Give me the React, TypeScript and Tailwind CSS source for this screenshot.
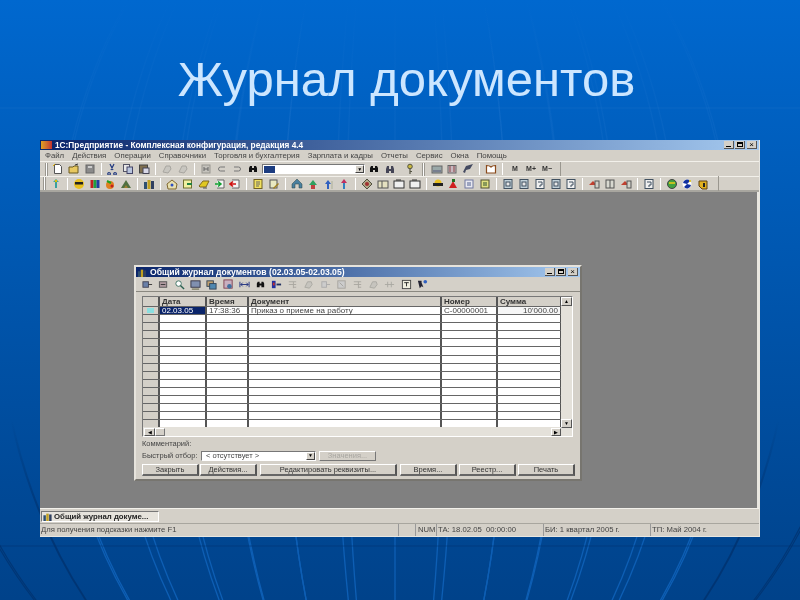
import type { ReactNode } from 'react';

const icons: Record<string, ReactNode> = {
  doc: <><path d="M2.5 1.5h5l2 2v7h-7z" fill="#fff" stroke="#555" /><path d="M1 3l2-2" stroke="#e0b000" /></>,
  folder: <><path d="M1 4h4l1-1h4v7H1z" fill="#e8c860" stroke="#6a5a20" /><path d="M7 2l3-1" stroke="#333" /></>,
  disk: <><rect x="2" y="2" width="8" height="8" fill="#8a8a8a" stroke="#666" /><rect x="4" y="3" width="4" height="2" fill="#ccc" /></>,
  cut: <path d="M4 1l3 6M8 1L5 7M3 9.5a1.3 1.3 0 1 0 .1 0M9 9.5a1.3 1.3 0 1 0 .1 0" fill="none" stroke="#223a80" strokeWidth="1.2" />,
  copy: <><rect x="1.5" y="1.5" width="6" height="7" fill="#e8e8e8" stroke="#556" /><rect x="5" y="4" width="5.5" height="6.5" fill="#b8c4dc" stroke="#446" /></>,
  paste: <><rect x="1.5" y="2" width="8" height="8" fill="#807050" stroke="#444" /><rect x="5" y="5" width="6" height="5.5" fill="#d8d8e8" stroke="#445" /></>,
  faded: <><path d="M2 9l3-6h4l1 3-3 4z" fill="#c8c6c0" stroke="#a8a6a0" /></>,
  calc: <><rect x="2" y="2" width="8" height="8" fill="#c4c2bc" stroke="#98968f" /><path d="M4 4v4M8 4v4M4 6h4" stroke="#666" /></>,
  undo: <path d="M9 8H4.5a2 2 0 0 1 0-4H9" fill="none" stroke="#777" strokeWidth="1" />,
  redo: <path d="M3 4h4.5a2 2 0 0 1 0 4H3" fill="none" stroke="#777" strokeWidth="1" />,
  bino: <path d="M2 9V5l1-2h2v2h2V3h2l1 2v4H7V7H5v2z" fill="#111" />,
  bino2: <path d="M2 10V6l1-3h2v3h2V3h2l1 3v4H7V8H5v2z" fill="#445" />,
  key: <><circle cx="6" cy="3.5" r="2.3" fill="#c8b840" stroke="#554" /><path d="M6 5.5V11M6 8.5h2" stroke="#554" strokeWidth="1.2" /></>,
  screen: <><rect x="1" y="3" width="10" height="7" fill="#9aa8a8" stroke="#666" /><path d="M2 8h8" stroke="#557" /></>,
  sheet: <><rect x="2" y="2.5" width="8" height="7.5" fill="#c8b8c0" stroke="#666" /><path d="M4 3v6M8 3v6" stroke="#844" /></>,
  flag: <path d="M1 9l3-6 7-2-3 5-4 1-1 3z" fill="#444a60" />,
  book: <><path d="M1.5 2.5c2 0 3.5.5 4.5 1.5 1-1 2.5-1.5 4.5-1.5v7.5H1.5z" fill="#fff" stroke="#8a4a1a" strokeWidth="1.2" /></>,
  tree: <><path d="M6 1l3 3H7v6H5V4H3z" fill="#38a0a0" /><circle cx="6" cy="3" r="1.2" fill="#e0c000" /></>,
  glasses: <><circle cx="6" cy="6" r="5" fill="#e8c020" /><rect x="2" y="4" width="8" height="2.5" fill="#222" /></>,
  books: <><rect x="1.5" y="2" width="3" height="8" fill="#c02020" /><rect x="4.5" y="2" width="3" height="8" fill="#20a040" /><rect x="7.5" y="2" width="3" height="8" fill="#2040a0" /></>,
  apple: <><circle cx="6" cy="7" r="4" fill="#e08020" /><path d="M3 3l4 2" stroke="#20a020" strokeWidth="2" /><circle cx="8" cy="8" r="1.5" fill="#c02020" /></>,
  hill: <><path d="M1 10l5-8 5 8z" fill="#507040" /><path d="M4 10l2-3 2 3z" fill="#a08030" /></>,
  bars: <><rect x="1" y="4" width="3" height="7" fill="#305070" /><rect x="4.5" y="2" width="3" height="9" fill="#c0a020" /><rect x="8" y="3" width="3" height="8" fill="#304060" /></>,
  housey: <><path d="M1 6l5-4 5 4-1 5H2z" fill="#e8e0b0" stroke="#806830" /><circle cx="6" cy="7" r="1.5" fill="#3050c0" /></>,
  boxy: <><rect x="1.5" y="2" width="8" height="8" fill="#f0f0a0" stroke="#707030" /><path d="M5 6h5" stroke="#208040" strokeWidth="2" /></>,
  cube: <><path d="M1 8l4-5h6l-3 6H2z" fill="#e0c820" stroke="#806820" /><path d="M5 10h4" stroke="#555" /></>,
  arrg: <><path d="M3 2h7v8H3" fill="#f4f4f4" stroke="#666" /><path d="M1 6h5M4 3.5L7 6 4 8.5" fill="none" stroke="#10a030" strokeWidth="1.5" /></>,
  arrr: <><path d="M3 2h7v8H3" fill="#f4f4f4" stroke="#666" /><path d="M7 6H1M4 3.5L1 6l3 2.5" fill="none" stroke="#d01010" strokeWidth="1.5" /></>,
  note: <><rect x="2" y="1.5" width="8" height="9" fill="#f0e060" stroke="#706020" /><path d="M4 4h4M4 6h4M4 8h3" stroke="#666" /></>,
  note2: <><rect x="2" y="2" width="7" height="8" fill="#e8e8c0" stroke="#555" /><path d="M5 10l5-5 1 1-5 5z" fill="#a08020" /></>,
  up1: <path d="M1 10V6l5-5 5 5v4H8V6H4v4z" fill="#4a80a0" stroke="#2a4040" strokeWidth=".5" />,
  up2: <><path d="M2 7l4-5 4 5z" fill="#30a060" /><path d="M4 11V7h4v4z" fill="#c04040" /></>,
  up3: <><path d="M2 6l3-4 3 4z" fill="#3060c0" /><rect x="4" y="6" width="2" height="5" fill="#3060c0" /><rect x="8" y="3" width="2" height="8" fill="#c0c0b0" /></>,
  up4: <><path d="M3 5l3-4 3 4z" fill="#c03060" /><rect x="5" y="5" width="2" height="6" fill="#3080c0" /></>,
  diam: <><path d="M6 1l5 5-5 5-5-5z" fill="#b0a888" stroke="#505040" /><circle cx="6" cy="6" r="2" fill="#a03030" /></>,
  fold2: <><rect x="1" y="3" width="10" height="7" fill="#e4e0c0" stroke="#555" /><path d="M5 3v7" stroke="#555" /></>,
  fold3: <><rect x="1" y="3" width="10" height="7" fill="#f0f0f0" stroke="#333" /><path d="M3 2h5" stroke="#333" /></>,
  hat: <><circle cx="6" cy="5" r="3.5" fill="#e8c020" /><rect x="1" y="5" width="10" height="3" fill="#222" /></>,
  red: <><path d="M2 10l4-7 4 7z" fill="#d02020" /><path d="M5 1h3v3H5z" fill="#207020" /></>,
  lines: <><rect x="2" y="2" width="8" height="8" fill="#e8e8f0" stroke="#7078a0" /><path d="M4 5h4M4 7h4" stroke="#506090" /></>,
  linesy: <><rect x="2" y="2" width="8" height="8" fill="#e0e080" stroke="#505030" /><path d="M4 5h4M4 7h4" stroke="#305030" /></>,
  page: <><rect x="2" y="1.5" width="8" height="9" fill="#c0d0d8" stroke="#405060" /><rect x="4" y="4" width="4" height="4" fill="#e8e8e8" stroke="#405060" /></>,
  pagew: <><rect x="2" y="1.5" width="8" height="9" fill="#f0f0f0" stroke="#405060" /><path d="M4 4h4v3H6v2" fill="none" stroke="#405060" /></>,
  redup: <><path d="M1 7l4-4 4 4z" fill="#c04030" /><rect x="7" y="3" width="4" height="7" fill="#d0d0c8" stroke="#555" /></>,
  cols: <><rect x="2" y="2" width="8" height="8" fill="#d8d8d0" stroke="#555" /><path d="M6 2v8" stroke="#555" /></>,
  wheel: <><circle cx="6" cy="6" r="4.5" fill="#40a040" stroke="#444" /><path d="M3 5h6" stroke="#c0c020" strokeWidth="2" /></>,
  swirl: <><circle cx="6" cy="6" r="4.5" fill="#fff" /><path d="M2 5a4 4 0 0 1 7-2l-3 3zM10 7a4 4 0 0 1-7 2l3-3z" fill="#1030a0" /><circle cx="9" cy="3" r="1" fill="#e0c000" /></>,
  box3: <><path d="M2 3h8v8H5l-3-3z" fill="#e0b020" stroke="#604010" /><rect x="6" y="5" width="2" height="4" fill="#222" /></>,
  t1: <><rect x="1" y="3" width="6" height="6" fill="#6a80a8" stroke="#445" /><path d="M7 6h4" stroke="#333" /></>,
  t2: <><rect x="1.5" y="3" width="8" height="6" fill="#b09aa0" stroke="#555" /><path d="M3 6h5" stroke="#333" /></>,
  t3: <><circle cx="5" cy="5" r="3" fill="#fff" stroke="#3a7060" /><path d="M7 7l4 4" stroke="#2a6050" strokeWidth="1.5" /></>,
  t4: <><rect x="1" y="2" width="10" height="7" fill="#8090b0" stroke="#334" /><path d="M2 11h8" stroke="#553" /></>,
  t5: <><rect x="1" y="2" width="7" height="6" fill="#c0a070" stroke="#345" /><rect x="4" y="5" width="7" height="6" fill="#5088b0" stroke="#345" /></>,
  t6: <><rect x="1" y="1" width="9" height="9" fill="#c8b0c0" stroke="#804050" /><circle cx="7" cy="8" r="2.5" fill="#4070a0" /></>,
  width: <path d="M1 3v6M11 3v6M2 6h8M2 6l2-2M2 6l2 2M10 6L8 4M10 6L8 8" fill="none" stroke="#203080" />,
  filter: <><rect x="1" y="2" width="4" height="8" fill="#2030a0" /><rect x="2" y="4" width="2" height="3" fill="#c03030" /><path d="M6 6h5" stroke="#203060" strokeWidth="2" /></>,
  dim1: <path d="M2 3h8M2 6h8M7 9h3M7 3v7" stroke="#a8a6a0" fill="none" />,
  dim2: <path d="M2 9l3-6h4l1 3-3 4z" fill="#c6c4be" stroke="#aaa8a2" />,
  dim3: <><rect x="2" y="3" width="5" height="6" fill="#ccc" stroke="#aaa" /><path d="M7 6h4" stroke="#aaa" /></>,
  dim4: <><rect x="2" y="2" width="8" height="8" fill="#ccc" stroke="#a4a29c" /><path d="M4 4l4 4" stroke="#a4a29c" /></>,
  dim5: <path d="M1 6h10M4 3v6M8 3v6" stroke="#aaa8a2" fill="none" />,
  cal: <><rect x="1.5" y="1.5" width="9" height="9" fill="#f0efe0" stroke="#444" /><path d="M3.5 4h5M6 4v4" stroke="#222" /></>,
  hint: <><path d="M1 2h4v2L7 9 5 8 3 10z" fill="#223" /><circle cx="9" cy="3" r="2" fill="#3060c0" /></>,
};

const topTools = ['doc', 'folder', 'disk', '|', 'cut', 'copy', 'paste', '|', 'faded', 'faded', '|', 'calc', 'undo', 'redo', 'bino'];
const topTools2 = ['bino', 'bino2', 'gap', 'key', '||', 'screen', 'sheet', 'flag', '|', 'book', '|'];
const secondTools = [
  'tree', '|', 'glasses', 'books', 'apple', 'hill', '|', 'bars', '|', 'housey', 'boxy', 'cube', 'arrg', 'arrr', '|', 'note', 'note2', '|',
  'up1', 'up2', 'up3', 'up4', '|', 'diam', 'fold2', 'fold3', 'fold3', '|', 'hat', 'red', 'lines', 'linesy', '|', 'page', 'page', 'pagew', 'page', 'pagew', '|',
  'redup', 'cols', 'redup', '|', 'pagew', '|', 'wheel', 'swirl', 'box3',
];
const journalTools = ['t1', 't2', 't3', 't4', 't5', 't6', 'width', 'bino', 'filter', 'dim1', 'dim2', 'dim3', 'dim4', 'dim1', 'dim2', 'dim5', 'cal', 'hint'];

const columns = ['Дата', 'Время', 'Документ', 'Номер', 'Сумма'];
const rowTemplate = 'grid grid-cols-[17px_47px_42px_193px_56px_64px]';

function Tool({ name }: { name: string }) {
  if (name === '|') return <div className="mx-[3px] h-[12px] w-px shrink-0 border-r border-white bg-[#9a978f]" />;
  if (name === '||') return <div className="mx-[4px] h-[13px] w-[3px] shrink-0 border-x border-[#9a978f] bg-white" />;
  if (name === 'gap') return <div className="w-[4px] shrink-0" />;
  return (
    <div className="flex w-[15.85px] shrink-0 items-center justify-center">
      <svg width="12" height="12" viewBox="0 0 12 12">{icons[name]}</svg>
    </div>
  );
}

function Grip() {
  return <div className="mr-[2px] h-[13px] w-[3px] shrink-0 border-x border-[#9a978f] bg-white" />;
}

function Button({ label, width }: { label: string; width: string }) {
  return (
    <div className={`flex h-[12px] items-center justify-center border-t border-l border-white border-r-2 border-b-2 border-r-[#555] border-b-[#666] bg-[#d4d0c8] text-[7.5px] text-[#333] ${width}`}>
      {label}
    </div>
  );
}

function WinControls() {
  return (
    <div className="ml-auto mr-[2px] flex gap-px">
      <div className="flex h-[8px] w-[10px] items-end justify-center border-r border-b border-[#555] bg-[#d4d0c8] pb-px"><div className="h-px w-[5px] bg-black" /></div>
      <div className="flex h-[8px] w-[10px] items-center justify-center border-r border-b border-[#555] bg-[#d4d0c8]"><div className="h-[5px] w-[6px] border border-t-2 border-black" /></div>
      <div className="ml-px flex h-[8px] w-[10px] items-center justify-center border-r border-b border-[#555] bg-[#d4d0c8] text-[8px] leading-none text-black">×</div>
    </div>
  );
}

function Journal() {
  return (
    <div className="flex h-[216px] w-[448px] flex-col border-2 border-[#e6e3dc] border-r-[#77756f] border-b-[#77756f] bg-[#d4d0c8]">
      <div className="flex h-[10px] items-center bg-linear-to-r from-[#0a246a] to-[#a6caf0] pl-px">
        <svg width="10" height="9" viewBox="0 0 12 11">{icons.bars}</svg>
        <span className="ml-[3px] text-[8.6px] font-bold whitespace-nowrap text-white">Общий журнал документов (02.03.05-02.03.05)</span>
        <WinControls />
      </div>
      <div className="flex h-[15px] items-center border-b border-[#8a8880] pl-[3px]">
        {journalTools.map((name, i) => (
          <div key={i} className="flex w-[16.2px] shrink-0 justify-center">
            <svg width="11" height="11" viewBox="0 0 12 12">{icons[name]}</svg>
          </div>
        ))}
      </div>
      <div className="mx-[6px] mt-[4px] flex h-[141px] w-[431px] flex-col border border-white border-t-[#777] border-l-[#777] bg-[#e4e1da]">
        <div className="flex h-[132px]">
          <div className="w-[419px] overflow-hidden">
            <div className={`${rowTemplate} h-[9px] bg-[#d4d0c8]`}>
              <div className="border-r-2 border-[#555]" />
              {columns.map((title) => (
                <div key={title} className="border-r-2 border-[#555] pl-[2px] text-[8px] leading-[9px] font-bold text-[#333]">{title}</div>
              ))}
            </div>
            {Array.from({ length: 15 }, (_, r) => (
              <div key={r} className={`${rowTemplate} h-[8.1px] border-t border-[#666] bg-white text-[8px] leading-[7px] text-[#444]`}>
                <div className="flex items-center justify-center border-r-2 border-[#555] bg-[#d4d0c8]">
                  {r === 0 && <div className="h-[5px] w-[7px] bg-[#8adfe0]" />}
                </div>
                <div className={`border-r-2 border-[#555] pl-[2px] ${r === 0 ? 'bg-[#0a246a] text-white' : ''}`}>{r === 0 ? '02.03.05' : ''}</div>
                <div className="border-r-2 border-[#555] pl-[2px]">{r === 0 ? '17:38:36' : ''}</div>
                <div className="border-r-2 border-[#555] pl-[2px]">{r === 0 ? 'Приказ о приеме на работу' : ''}</div>
                <div className="border-r-2 border-[#555] pl-[2px]">{r === 0 ? 'С-00000001' : ''}</div>
                <div className={`border-r-2 border-[#555] pr-[2px] text-right ${r === 0 ? 'bg-[#f6f6f6]' : ''}`}>{r === 0 ? '10\'000.00' : ''}</div>
              </div>
            ))}
          </div>
          <div className="flex w-[11px] flex-col justify-between">
            <div className="flex h-[9px] items-center justify-center border border-white border-r-[#555] border-b-[#555] bg-[#d4d0c8] text-[5px] leading-none text-black">▲</div>
            <div className="flex h-[9px] items-center justify-center border border-white border-r-[#555] border-b-[#555] bg-[#d4d0c8] text-[5px] leading-none text-black">▼</div>
          </div>
        </div>
        <div className="flex h-[8px] pl-[1px]">
          <div className="flex h-[8px] w-[11px] items-center justify-center border border-white border-r-[#555] border-b-[#555] bg-[#d4d0c8] text-[5px] leading-none text-black">◀</div>
          <div className="h-[8px] w-[10px] border border-white border-r-[#777] border-b-[#777] bg-[#d4d0c8]" />
          <div className="ml-auto mr-[11px] flex h-[8px] w-[10px] items-center justify-center border border-white border-r-[#555] border-b-[#555] bg-[#d4d0c8] text-[5px] leading-none text-black">▶</div>
        </div>
      </div>
      <div className="mt-[2px] pl-[6px] text-[7.5px] leading-[10px] text-[#444]">Комментарий:</div>
      <div className="mt-[1px] flex items-center pl-[6px] text-[7.5px] text-[#444]">
        <span className="w-[59px] whitespace-nowrap">Быстрый отбор:</span>
        <div className="flex h-[10px] w-[115px] items-center justify-between border border-[#777] border-r-white border-b-white bg-white pl-[4px]">
          <span className="leading-none">&lt; отсутствует &gt;</span>
          <div className="flex h-[8px] w-[9px] items-center justify-center border border-white border-r-[#444] border-b-[#444] bg-[#d4d0c8] text-[5px] leading-none text-black">▼</div>
        </div>
        <div className="ml-[3px] flex h-[10px] w-[57px] items-center justify-center border border-white border-r-[#777] border-b-[#777] text-[#a8a6a0]">Значения...</div>
      </div>
      <div className="mt-[3px] flex pl-[6px]">
        <Button label="Закрыть" width="w-[57px]" />
        <div className="w-px" />
        <Button label="Действия..." width="w-[57px]" />
        <div className="w-[3px]" />
        <Button label="Редактировать реквизиты..." width="w-[137px]" />
        <div className="w-[3px]" />
        <Button label="Время..." width="w-[57px]" />
        <div className="w-[2px]" />
        <Button label="Реестр..." width="w-[57px]" />
        <div className="w-[2px]" />
        <Button label="Печать" width="w-[57px]" />
      </div>
    </div>
  );
}

function Backdrop() {
  const light = [298, 250, 196, 147, 99, 52, 43, 99, 146, 192, 242, 296];
  const dark = [344, 345, 400, 402];
  return (
    <svg className="absolute inset-0" width="800" height="600" viewBox="0 0 800 600" fill="none">
      <defs>
        <linearGradient id="fan" x1="0" y1="0" x2="0" y2="600" gradientUnits="userSpaceOnUse">
          <stop offset="0" stopColor="#3c86d8" stopOpacity="0" />
          <stop offset="0.08" stopColor="#3c86d8" stopOpacity="0.05" />
          <stop offset="0.25" stopColor="#3c86d8" stopOpacity="0.14" />
          <stop offset="0.85" stopColor="#0d5eb4" />
          <stop offset="1" stopColor="#0d5eb4" />
        </linearGradient>
        <linearGradient id="edge" x1="0" y1="0" x2="0" y2="600" gradientUnits="userSpaceOnUse">
          <stop offset="0.7" stopColor="#00306c" stopOpacity="0" />
          <stop offset="0.88" stopColor="#00306c" stopOpacity="0.7" />
          <stop offset="1" stopColor="#00306c" stopOpacity="0.7" />
        </linearGradient>
      </defs>
      {light.map((off, i) => (
        <ellipse key={i} cx="395" cy="300" rx={off / 0.87} ry="480" stroke="url(#fan)" strokeWidth="1.3" />
      ))}
      <path d="M395 0V600" stroke="url(#fan)" strokeWidth="1.3" />
      {dark.map((off, i) => (
        <ellipse key={i} cx="395" cy="300" rx={off / 0.87} ry="480" stroke="url(#edge)" strokeWidth="1.2" />
      ))}
      <path d="M0 108H800" stroke="#3c86d8" strokeOpacity="0.18" />
      <path d="M0 546H800" stroke="#00306c" strokeOpacity="0.5" />
    </svg>
  );
}

export default function App() {
  return (
    <div className="relative h-[600px] w-[800px] overflow-hidden bg-linear-to-b from-[#0068cf] to-[#00428a] font-['Liberation_Sans']">
      <Backdrop />
      <div className="relative">
        <h1 className="h-[140px] pt-[44px] pl-[13px] text-center text-[49px] leading-[70px] font-normal text-[#cce6ff]">Журнал документов</h1>
        <div className="mx-[40px] flex h-[397px] w-[720px] flex-col border-r border-b border-[#e8e6e0] bg-[#d4d0c8] blur-[0.6px]">
          <div className="flex h-[10px] shrink-0 items-center bg-linear-to-r from-[#0a246a] to-[#a6caf0] pl-[1px]">
            <div className="mr-[3px] h-[8px] w-[11px] bg-linear-to-r from-[#e0a020] to-[#c03030]" />
            <span className="text-[8.3px] font-bold whitespace-nowrap text-white">1С:Предприятие - Комплексная конфигурация, редакция 4.4</span>
            <WinControls />
          </div>
          <div className="flex h-[11px] shrink-0 items-center gap-[8px] pl-[5px] text-[7.8px] whitespace-nowrap text-[#444]">
            {['Файл', 'Действия', 'Операции', 'Справочники', 'Торговля и бухгалтерия', 'Зарплата и кадры', 'Отчеты', 'Сервис', 'Окна', 'Помощь'].map((item) => (
              <span key={item}>{item}</span>
            ))}
          </div>
          <div className="flex h-[15px] shrink-0 items-center border-t border-[#f2f0ea] pl-[5px]">
            <Grip />
            {topTools.map((name, i) => <Tool key={i} name={name} />)}
            <div className="mx-[1px] flex h-[10px] w-[103px] shrink-0 items-center justify-between border border-[#777] border-r-white border-b-white bg-white">
              <div className="ml-px h-[7px] w-[11px] bg-[#1c3c80]" />
              <div className="flex h-[8px] w-[9px] items-center justify-center border border-white border-r-[#444] border-b-[#444] bg-[#d4d0c8] text-[5px] leading-none text-black">▼</div>
            </div>
            {topTools2.map((name, i) => <Tool key={i} name={name} />)}
            <span className="ml-[1px] w-[16px] text-center text-[7px] font-bold text-[#333]">M</span>
            <span className="w-[16px] text-center text-[7px] font-bold text-[#333]">M+</span>
            <span className="w-[16px] text-center text-[7px] font-bold text-[#333]">M−</span>
            <div className="ml-[5px] h-[15px] w-px bg-[#9a978f]" />
          </div>
          <div className="flex h-[16px] shrink-0 items-center border-t border-[#f2f0ea] border-b-2 border-b-[#a8a69f] pl-[3px]">
            <Grip />
            {secondTools.map((name, i) => <Tool key={i} name={name} />)}
            <div className="ml-[7px] h-[15px] w-px bg-[#9a978f]" />
          </div>
          <div className="flex min-h-0 flex-1 items-start border-r-2 border-r-[#e8e6e0] bg-[#808080] pt-[73px] pl-[94px]">
            <Journal />
          </div>
          <div className="flex h-[15px] shrink-0 items-end border-t border-[#f2f0ea] pb-px pl-px">
            <div className="flex h-[11px] w-[118px] items-center border border-[#777] border-r-white border-b-white bg-[#e6e3dc] text-[7.8px] font-bold whitespace-nowrap text-[#222]">
              <svg width="11" height="9" viewBox="0 0 12 11">{icons.bars}</svg>
              <span className="ml-px">Общий журнал докуме...</span>
            </div>
          </div>
          <div className="flex h-[13px] shrink-0 items-stretch border-t border-[#a8a69f] text-[7.7px] leading-[11px] whitespace-nowrap text-[#444]">
            <div className="w-[358px] pl-[1px]">Для получения подсказки нажмите F1</div>
            <div className="w-[17px] border-l border-[#999]" />
            <div className="w-[21px] border-l border-[#999] pl-[2px]">NUM</div>
            <div className="w-[107px] border-l border-[#999] pl-[1px]">ТА: 18.02.05&nbsp; 00:00:00</div>
            <div className="w-[107px] border-l border-[#999] pl-[1px]">БИ: 1 квартал 2005 г.</div>
            <div className="flex-1 border-l border-[#999] pl-[1px]">ТП: Май 2004 г.</div>
          </div>
        </div>
      </div>
    </div>
  );
}
